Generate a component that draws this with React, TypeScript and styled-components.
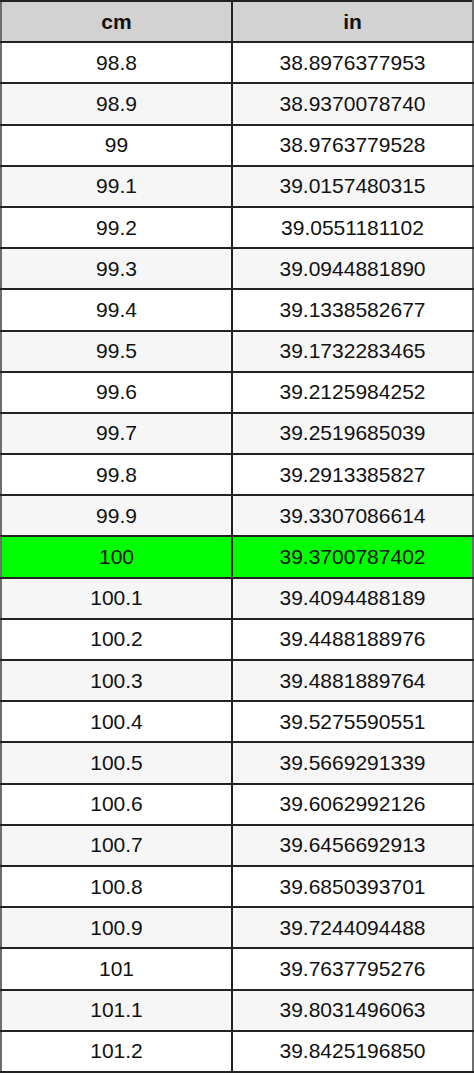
import styled, { createGlobalStyle } from 'styled-components';

const GlobalStyle = createGlobalStyle`
    html, body {
        margin: 0;
        padding: 0;
        background: #ffffff;
    }
`;

const Table = styled.table`
    width: 474px;
    border-collapse: collapse;
    font-family: "Liberation Sans", Arial, sans-serif;
    font-size: 21px;
    color: #111;
    table-layout: fixed;
    border-left: 2px solid #6e6e6e;
    border-right: 2px solid #6e6e6e;
`;

const HeadCell = styled.th`
    height: 39.2px;
    padding: 0;
    background: #d2d2d2;
    font-weight: bold;
    text-align: center;
    border: 2px solid #222;
    border-left-color: #6e6e6e;
    &:last-child {
        border-right-color: #6e6e6e;
    }
    &:first-child {
        border-right-color: #222;
    }
`;

const Row = styled.tr<{ $striped: boolean; $active: boolean }>`
    background: ${({ $active, $striped }) =>
        $active ? '#00ff00' : $striped ? '#f6f6f6' : '#ffffff'};
`;

const Cell = styled.td`
    height: 39.2px;
    padding: 0;
    text-align: center;
    border: 2px solid #222;
    &:first-child {
        border-left-color: #6e6e6e;
    }
    &:last-child {
        border-right-color: #6e6e6e;
    }
`;

const rows: [string, string][] = [
    ['98.8', '38.8976377953'],
    ['98.9', '38.9370078740'],
    ['99', '38.9763779528'],
    ['99.1', '39.0157480315'],
    ['99.2', '39.0551181102'],
    ['99.3', '39.0944881890'],
    ['99.4', '39.1338582677'],
    ['99.5', '39.1732283465'],
    ['99.6', '39.2125984252'],
    ['99.7', '39.2519685039'],
    ['99.8', '39.2913385827'],
    ['99.9', '39.3307086614'],
    ['100', '39.3700787402'],
    ['100.1', '39.4094488189'],
    ['100.2', '39.4488188976'],
    ['100.3', '39.4881889764'],
    ['100.4', '39.5275590551'],
    ['100.5', '39.5669291339'],
    ['100.6', '39.6062992126'],
    ['100.7', '39.6456692913'],
    ['100.8', '39.6850393701'],
    ['100.9', '39.7244094488'],
    ['101', '39.7637795276'],
    ['101.1', '39.8031496063'],
    ['101.2', '39.8425196850'],
];

export default function App() {
    return (
        <>
            <GlobalStyle />
            <Table>
                <colgroup>
                    <col style={{ width: 231 }} />
                    <col />
                </colgroup>
                <thead>
                    <tr>
                        <HeadCell>cm</HeadCell>
                        <HeadCell>in</HeadCell>
                    </tr>
                </thead>
                <tbody>
                    {rows.map(([cm, inch], i) => (
                        <Row key={cm} $striped={i % 2 === 1} $active={cm === '100'}>
                            <Cell>{cm}</Cell>
                            <Cell>{inch}</Cell>
                        </Row>
                    ))}
                </tbody>
            </Table>
        </>
    );
}
